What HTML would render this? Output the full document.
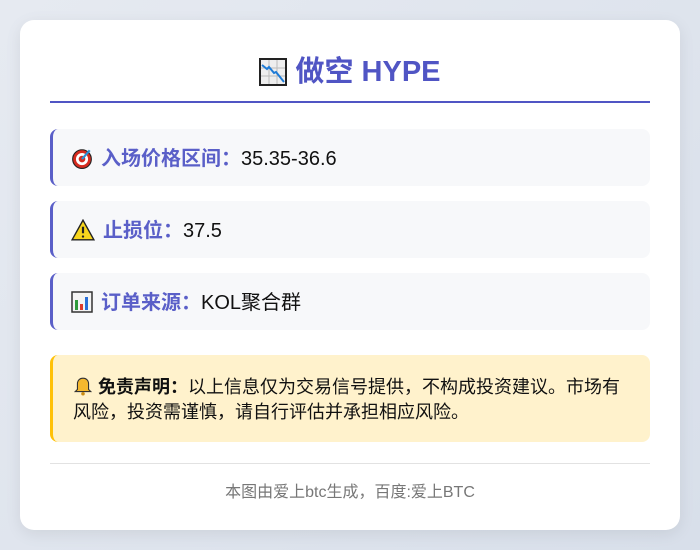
<!DOCTYPE html>
<html><head><meta charset="utf-8"><style>
*{margin:0;padding:0;box-sizing:border-box}
body{width:700px;height:550px;background:linear-gradient(135deg,#e6eaf1,#d8dfea);font-family:"Liberation Sans","Noto Sans CJK SC",sans-serif;position:relative;overflow:hidden}
.card{position:absolute;left:20px;top:20px;width:660px;height:510px;background:#fff;border-radius:14px;box-shadow:0 4px 16px rgba(0,0,0,.08)}
.title{position:absolute;left:30px;right:30px;top:32px;text-align:center;font-size:29px;font-weight:bold;color:#5055c4;line-height:40px}
.title svg{vertical-align:-5px;margin-right:8px}
.hr1{position:absolute;left:30px;width:600px;top:81px;height:2px;background:#5055c4}
.row{position:absolute;left:30px;width:600px;height:57px;background:#f7f8fa;border-left:3px solid #5a5fc8;border-radius:8px;font-size:20px;line-height:57px;padding-left:18px;padding-top:2px;color:#111}
.row b{color:#5a5fc8}
.row svg{vertical-align:-4px;margin-right:8px}
.disc{position:absolute;left:30px;width:600px;top:335px;height:87px;background:#fff2cc;border-left:3px solid #ffc107;border-radius:8px;font-size:18px;line-height:25px;padding:20px 18px 0 20px;color:#111}
.hr2{position:absolute;left:30px;width:600px;top:443px;height:1px;background:#e2e2e2}
.foot{position:absolute;left:30px;width:600px;top:458px;text-align:center;font-size:16px;color:#777}
</style></head><body>
<div class="card">
<div class="title"><svg width="28" height="28" viewBox="0 0 28 28"><rect x="1" y="1" width="26" height="26" fill="#eee" stroke="#222" stroke-width="2"/><path d="M10 2v24M18 2v24M2 10h24M2 18h24" stroke="#bbb" stroke-width="1"/><path d="M3 7l5 4 2-2 5 6 2-1 8 10" stroke="#1e7bd6" stroke-width="2" fill="none"/></svg>做空 HYPE</div>
<div class="hr1"></div>
<div class="row" style="top:109px"><svg width="22" height="22" viewBox="0 0 20 20"><circle cx="10" cy="11" r="8.5" fill="#d62b1f" stroke="#222"/><circle cx="10" cy="11" r="5.5" fill="#fff"/><circle cx="10" cy="11" r="3" fill="#d62b1f"/><path d="M10 11L17 3" stroke="#2a8fd6" stroke-width="2"/></svg><b>入场价格区间：</b>35.35-36.6</div>
<div class="row" style="top:181px"><svg width="24" height="22" viewBox="0 0 22 20"><path d="M11 1L21 19H1Z" fill="#f7d51d" stroke="#222" stroke-width="1.3"/><path d="M11 7v6" stroke="#222" stroke-width="2"/><circle cx="11" cy="16" r="1.1" fill="#222"/></svg><b>止损位：</b>37.5</div>
<div class="row" style="top:253px"><svg width="22" height="22" viewBox="0 0 22 22"><rect x="1" y="1" width="20" height="20" fill="#f4f4f4" stroke="#333" stroke-width="1.5"/><rect x="4" y="9" width="3" height="10" fill="#2e9a3a"/><rect x="9" y="13" width="3" height="6" fill="#e03a2a"/><rect x="14" y="6" width="3" height="13" fill="#2a6fd6"/></svg><b>订单来源：</b>KOL聚合群</div>
<div class="disc"><svg width="20" height="20" viewBox="0 0 18 18" style="vertical-align:-3px"><path d="M9 2c-3 0-5 2-5 5v5l-2 2h14l-2-2V7c0-3-2-5-5-5z" fill="#f5b82e" stroke="#333"/><circle cx="9" cy="16" r="1.6" fill="#c88a10"/></svg> <b>免责声明：</b>以上信息仅为交易信号提供，不构成投资建议。市场有风险，投资需谨慎，请自行评估并承担相应风险。</div>
<div class="hr2"></div>
<div class="foot">本图由爱上btc生成，百度:爱上BTC</div>
</div>
</body></html>
